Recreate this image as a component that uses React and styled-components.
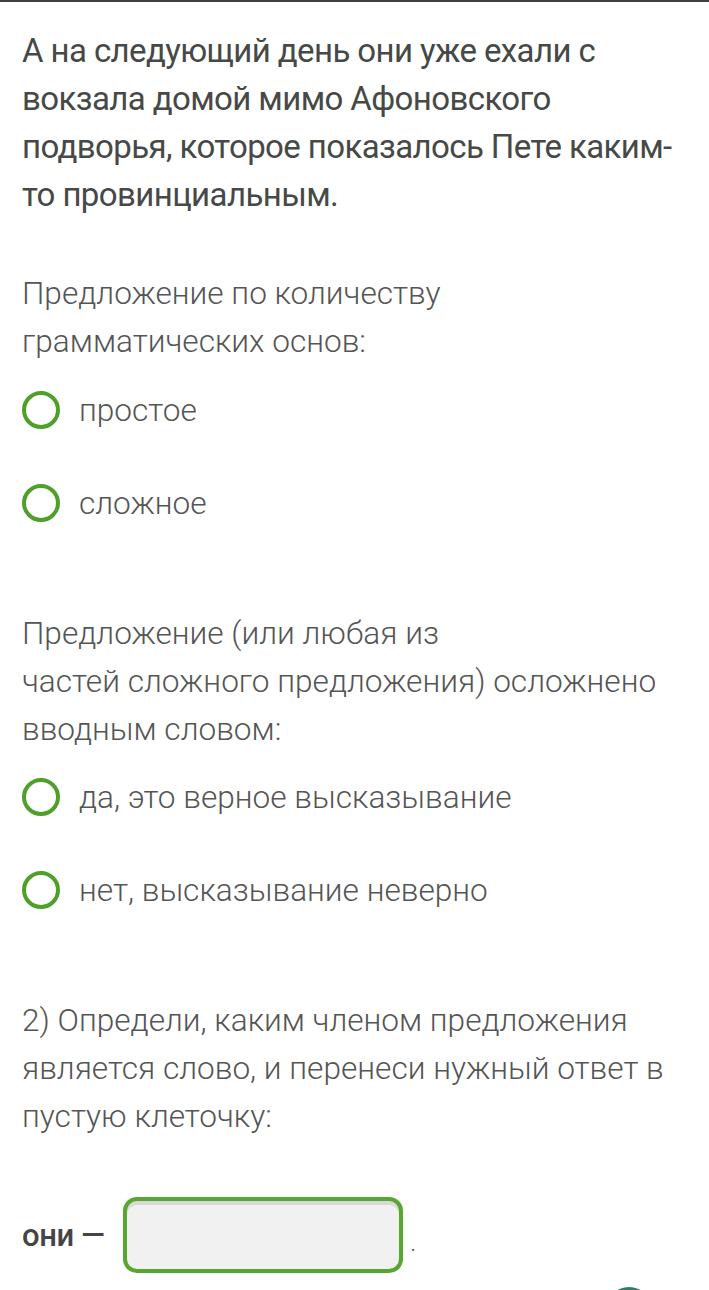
import React from 'react';
import styled, { createGlobalStyle } from 'styled-components';

const GlobalStyle = createGlobalStyle`
  html, body {
    margin: 0;
    padding: 0;
    background: #ffffff;
  }
  body {
    font-family: Roboto, "Noto Sans", sans-serif;
  }
`;

const Page = styled.div`
  width: 709px;
  min-height: 1290px;
  position: relative;
  overflow: hidden;
  background: #fff;
`;

const TopRule = styled.div`
  height: 2px;
  background: #3b3f3e;
`;

const Content = styled.div`
  padding: 25px 22px 0 22px;
  display: flex;
  flex-direction: column;
`;

const Title = styled.p`
  margin: 0;
  font-size: 33px;
  line-height: 48px;
  letter-spacing: -0.6px;
  font-weight: 400;
  color: #464946;
  white-space: nowrap;
`;

const Prompt = styled.p`
  margin: ${p => p.$top}px 0 0 0;
  font-size: 31.6px;
  line-height: 48px;
  font-weight: 300;
  color: #555;
  white-space: nowrap;
`;

const Options = styled.div`
  display: flex;
  flex-direction: column;
  gap: 45px;
  margin-top: ${p => p.$top}px;
`;

const Option = styled.label`
  display: flex;
  align-items: center;
  gap: 19px;
  height: 48px;
  font-size: 31.6px;
  font-weight: 300;
  color: #555;
`;

const Radio = styled.span`
  width: 30px;
  height: 30px;
  border: 4px solid #4f9f2b;
  border-radius: 50%;
  flex: none;
`;

const AnswerRow = styled.div`
  display: flex;
  align-items: center;
  margin-top: 56px;
  font-size: 31px;
  color: #454545;
`;

const Word = styled.span`
  font-weight: 500;
  letter-spacing: -0.4px;
  margin-right: 18px;
`;

const DropBox = styled.div`
  width: 272px;
  height: 68px;
  border: 4px solid #56a630;
  border-radius: 14px;
  background: #f1f1f2;
  box-shadow: inset 0 4px 0 #d9d9dc;
`;

const Dot = styled.span`
  margin-left: 8px;
  margin-top: 18px;
  font-size: 20px;
  color: #666;
`;

const Fab = styled.div`
  position: absolute;
  left: 606px;
  top: 1287px;
  width: 46px;
  height: 46px;
  border-radius: 50%;
  background: #2e7d6b;
`;

function RadioOption({ label }) {
  return (
    <Option>
      <Radio />
      <span>{label}</span>
    </Option>
  );
}

export default function App() {
  return (
    <Page>
      <GlobalStyle />
      <TopRule />
      <Content>
        <Title>
          А на следующий день они уже ехали с<br />
          вокзала домой мимо Афоновского<br />
          подворья, которое показалось Пете каким-<br />
          то провинциальным.
        </Title>

        <Prompt $top={51}>
          Предложение по количеству<br />
          грамматических основ:
        </Prompt>
        <Options $top={20}>
          <RadioOption label="простое" />
          <RadioOption label="сложное" />
        </Options>

        <Prompt $top={83}>
          Предложение (или любая из<br />
          частей сложного предложения) осложнено<br />
          вводным словом:
        </Prompt>
        <Options $top={19}>
          <RadioOption label="да, это верное высказывание" />
          <RadioOption label="нет, высказывание неверно" />
        </Options>

        <Prompt $top={83}>
          2) Определи, каким членом предложения<br />
          является слово, и перенеси нужный ответ в<br />
          пустую клеточку:
        </Prompt>

        <AnswerRow>
          <Word>они —</Word>
          <DropBox />
          <Dot>.</Dot>
        </AnswerRow>
      </Content>
      <Fab />
    </Page>
  );
}
